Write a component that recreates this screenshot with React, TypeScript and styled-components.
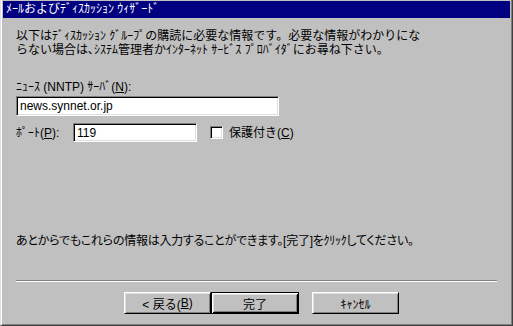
import React from 'react';
import styled, { createGlobalStyle } from 'styled-components';

const GlobalStyle = createGlobalStyle`
  html, body {
    margin: 0;
    padding: 0;
    background: #c0c0c0;
  }
  body {
    font-family: "Liberation Sans", "Noto Sans CJK JP", sans-serif;
    font-size: 12px;
    color: #000;
  }
`;

const Window = styled.div`
  width: 513px;
  height: 326px;
  box-sizing: border-box;
  background: #c0c0c0;
  border-left: 1px solid #dfdfdf;
  border-right: 1px solid #404040;
  border-bottom: 1px solid #404040;
  box-shadow: inset 1px 0 #fff, inset -1px -1px #808080;
  padding: 1px 2px 2px 2px;
  display: flex;
  flex-direction: column;
`;

const TitleBar = styled.div`
  height: 17px;
  background: #000080;
  color: #fff;
  display: flex;
  align-items: center;
  padding-left: 3px;
  line-height: 17px;
  white-space: nowrap;
`;

const Body = styled.div`
  flex: 1;
  display: flex;
  flex-direction: column;
  padding: 11px 0 0 13px;
`;

const Text = styled.p<{ $top?: number; $tight?: boolean }>`
  margin: ${(p) => p.$top ?? 0}px 0 0 0;
  line-height: 14px;
  white-space: nowrap;
  font-feature-settings: ${(p) => (p.$tight ? '"palt"' : 'normal')};
  letter-spacing: ${(p) => (p.$tight ? '-0.25px' : 'normal')};
`;

const Label = styled.span<{ $w?: number }>`
  white-space: nowrap;
  line-height: 14px;
  width: ${(p) => (p.$w ? `${p.$w}px` : 'auto')};
`;

const Key = styled.u`
  text-decoration: underline;
`;

const Field = styled.div<{ $w: number; $h: number }>`
  width: ${(p) => p.$w}px;
  height: ${(p) => p.$h}px;
  box-sizing: border-box;
  background: #fff;
  border: 1px solid;
  border-color: #808080 #fff #fff #808080;
  box-shadow: inset 1px 1px #000, inset -1px -1px #dfdfdf;
  padding: 0 3px;
  display: flex;
  align-items: center;
  white-space: nowrap;
`;

const Row = styled.div<{ $top: number }>`
  display: flex;
  align-items: center;
  margin-top: ${(p) => p.$top}px;
`;

const Check = styled.span`
  width: 13px;
  height: 13px;
  box-sizing: border-box;
  background: #fff;
  border: 1px solid;
  border-color: #808080 #fff #fff #808080;
  box-shadow: inset 1px 1px #000, inset -1px -1px #dfdfdf;
  margin: 0 6px 0 13px;
`;

const Spacer = styled.div`
  flex: 1;
`;

const Separator = styled.div`
  height: 0;
  border-top: 1px solid #808080;
  border-bottom: 1px solid #fff;
  margin: 0 13px 0 0;
`;

const Buttons = styled.div`
  display: flex;
  padding: 10px 0 0 108px;
  height: 22px;
  margin-bottom: 9px;
`;

const Button = styled.div<{ $default?: boolean; $gap?: number }>`
  width: ${(p) => (p.$default ? 88 : 87)}px;
  height: 22px;
  box-sizing: border-box;
  margin-left: ${(p) => p.$gap ?? 0}px;
  background: #c0c0c0;
  border: 1px solid;
  border-color: ${(p) => (p.$default ? '#000' : '#fff #000 #000 #fff')};
  box-shadow: ${(p) =>
    p.$default
      ? 'inset 1px 1px #fff, inset -1px -1px #000, inset 2px 2px #dfdfdf, inset -2px -2px #808080'
      : 'inset 1px 1px #dfdfdf, inset -1px -1px #808080'};
  display: flex;
  align-items: center;
  justify-content: center;
  white-space: nowrap;
`;

export default function App() {
  return (
    <>
      <GlobalStyle />
      <Window>
        <TitleBar>ﾒｰﾙおよびﾃﾞｨｽｶｯｼｮﾝ ｳｨｻﾞｰﾄﾞ</TitleBar>
        <Body>
          <Text>以下はﾃﾞｨｽｶｯｼｮﾝ ｸﾞﾙｰﾌﾟの購読に必要な情報です。必要な情報がわかりにな</Text>
          <Text>らない場合は､ｼｽﾃﾑ管理者かｲﾝﾀｰﾈｯﾄ ｻｰﾋﾞｽ ﾌﾟﾛﾊﾞｲﾀﾞにお尋ね下さい。</Text>
          <Text $top={23}>
            ﾆｭｰｽ (NNTP) ｻｰﾊﾞ(<Key>N</Key>):
          </Text>
          <Row $top={2}>
            <Field $w={263} $h={20}>news.synnet.or.jp</Field>
          </Row>
          <Row $top={7}>
            <Label $w={57}>
              ﾎﾟｰﾄ(<Key>P</Key>):
            </Label>
            <Field $w={124} $h={19}>119</Field>
            <Check />
            <Label>
              保護付き(<Key>C</Key>)
            </Label>
          </Row>
          <Text $top={92} $tight>
            あとからでもこれらの情報は入力することができます。[完了]をｸﾘｯｸしてください。
          </Text>
          <Spacer />
          <Separator />
          <Buttons>
            <Button>&lt; 戻る(<Key>B</Key>)</Button>
            <Button $default>完了</Button>
            <Button $gap={13}>ｷｬﾝｾﾙ</Button>
          </Buttons>
        </Body>
      </Window>
    </>
  );
}
